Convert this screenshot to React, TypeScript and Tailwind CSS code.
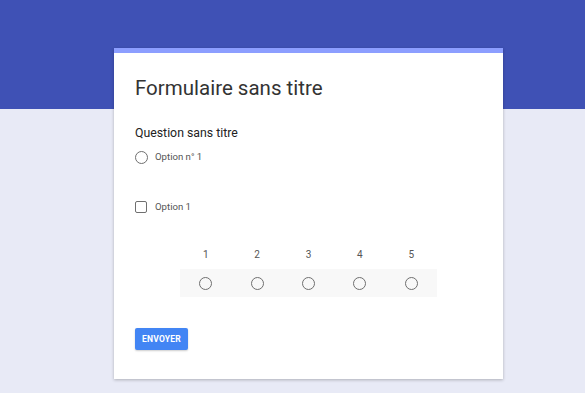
export default function App() {
  const scale = [1, 2, 3, 4, 5];

  return (
    <div
      className="min-h-screen bg-[linear-gradient(#3f51b5_0_109px,#e8eaf6_109px)] pt-[48px] pb-[14px]"
      style={{ fontFamily: "Roboto, 'Noto Sans', sans-serif" }}
    >
      <div className="ml-[114px] w-[389px] h-[331px] bg-white border-t-[5px] border-[#8c9eff] shadow-[0_1px_3px_rgba(0,0,0,0.25)] pl-[21px] pt-[23px]">
        <h1 className="text-[20.5px] leading-[24px] text-[#333]">Formulaire sans titre</h1>

        <div className="mt-[25px] text-[12.3px] leading-[16px] text-[#222]">Question sans titre</div>

        <div className="mt-[8px] flex items-center h-[16px]">
          <span className="w-[13px] h-[13px] rounded-full border-[1.5px] border-[#6f6f6f]" />
          <span className="ml-[7px] text-[9.6px] text-[#555]">Option n° 1</span>
        </div>

        <div className="mt-[34px] flex items-center h-[16px]">
          <span className="w-[12px] h-[12px] rounded-[2px] border-[1.5px] border-[#6f6f6f]" />
          <span className="ml-[8px] text-[9.6px] text-[#555]">Option 1</span>
        </div>

        <div className="mt-[33px] ml-[45px] w-[257px]">
          <div className="grid grid-cols-5 text-[10px] leading-[14px] text-[#555] text-center">
            {scale.map((n) => (
              <span key={n}>{n}</span>
            ))}
          </div>
          <div className="mt-[7px] h-[28px] bg-[#f8f8f8] grid grid-cols-5 items-center">
            {scale.map((n) => (
              <span key={n} className="justify-self-center w-[13px] h-[13px] rounded-full border-[1.5px] border-[#6f6f6f]" />
            ))}
          </div>
        </div>

        <button className="mt-[31px] w-[53px] h-[22px] rounded-[2px] bg-[#4285f4] text-white text-[8.5px] font-bold tracking-[0.2px] shadow-[0_1px_2px_rgba(0,0,0,0.2)]">
          ENVOYER
        </button>
      </div>
    </div>
  );
}
